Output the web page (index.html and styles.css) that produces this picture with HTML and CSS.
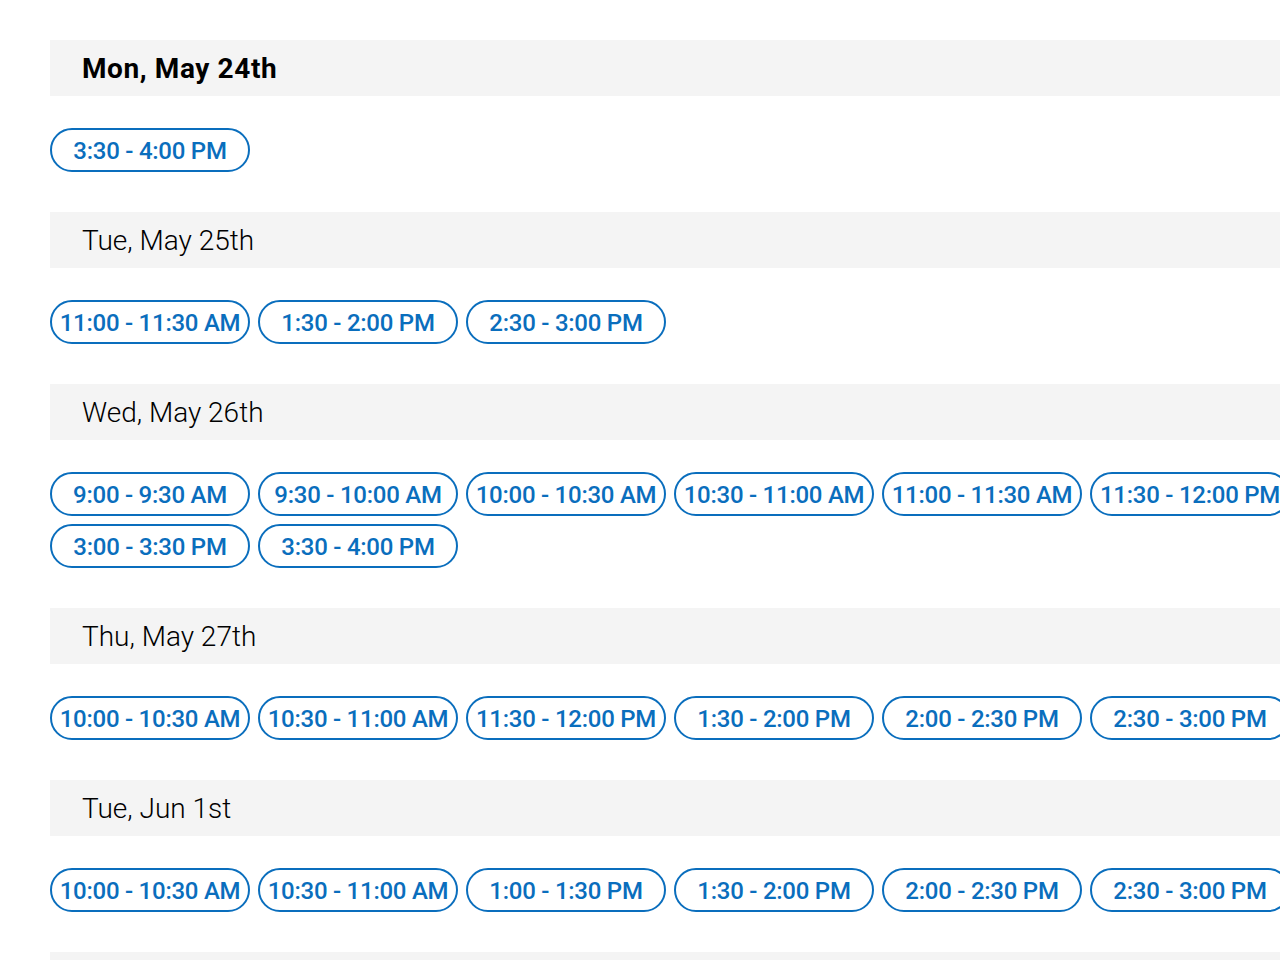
FILE: index.html
```html
<!DOCTYPE html>
<html lang="en">
<head>
    <meta charset="UTF-8">
    <meta name="viewport" content="width=device-width, initial-scale=1.0">
    <title>Available times</title>
    <link rel="stylesheet" href="styles.css">
</head>
<body>
    <div class="schedule">
        <div class="day">
            <h2 class="day-title active">Mon, May 24th</h2>
            <div class="slots">
                <button class="slot">3:30 - 4:00 PM</button>
            </div>
        </div>
        <div class="day">
            <h2 class="day-title">Tue, May 25th</h2>
            <div class="slots">
                <button class="slot">11:00 - 11:30 AM</button>
                <button class="slot">1:30 - 2:00 PM</button>
                <button class="slot">2:30 - 3:00 PM</button>
            </div>
        </div>
        <div class="day">
            <h2 class="day-title">Wed, May 26th</h2>
            <div class="slots">
                <button class="slot">9:00 - 9:30 AM</button>
                <button class="slot">9:30 - 10:00 AM</button>
                <button class="slot">10:00 - 10:30 AM</button>
                <button class="slot">10:30 - 11:00 AM</button>
                <button class="slot">11:00 - 11:30 AM</button>
                <button class="slot">11:30 - 12:00 PM</button>
                <button class="slot">3:00 - 3:30 PM</button>
                <button class="slot">3:30 - 4:00 PM</button>
            </div>
        </div>
        <div class="day">
            <h2 class="day-title">Thu, May 27th</h2>
            <div class="slots">
                <button class="slot">10:00 - 10:30 AM</button>
                <button class="slot">10:30 - 11:00 AM</button>
                <button class="slot">11:30 - 12:00 PM</button>
                <button class="slot">1:30 - 2:00 PM</button>
                <button class="slot">2:00 - 2:30 PM</button>
                <button class="slot">2:30 - 3:00 PM</button>
            </div>
        </div>
        <div class="day">
            <h2 class="day-title">Tue, Jun 1st</h2>
            <div class="slots">
                <button class="slot">10:00 - 10:30 AM</button>
                <button class="slot">10:30 - 11:00 AM</button>
                <button class="slot">1:00 - 1:30 PM</button>
                <button class="slot">1:30 - 2:00 PM</button>
                <button class="slot">2:00 - 2:30 PM</button>
                <button class="slot">2:30 - 3:00 PM</button>
            </div>
        </div>
        <div class="day">
            <h2 class="day-title"></h2>
        </div>
    </div>
</body>
</html>
```

FILE: styles.css
```css
body {
    font-family: Roboto, Arial, sans-serif;
    margin: 0;
    padding: 0;
    background: #fff;
    overflow: hidden;
}
.schedule {
    width: 1400px;
    padding: 40px 0 0 50px;
}
.day {
    margin-bottom: 40px;
}
.day-title {
    margin: 0 0 32px 0;
    height: 56px;
    line-height: 58px;
    padding-left: 32px;
    background: #f4f4f4;
    font-size: 28px;
    font-weight: 300;
    color: #000;
}
.day-title.active {
    font-weight: 700;
    letter-spacing: 0.6px;
}
.slots {
    display: flex;
    flex-wrap: wrap;
    gap: 8px;
}
.slot {
    box-sizing: border-box;
    width: 200px;
    height: 44px;
    padding: 2px 0 0 0;
    font-family: Roboto, Arial, sans-serif;
    font-size: 24px;
    font-weight: 500;
    letter-spacing: -0.25px;
    white-space: nowrap;
    color: #0a6ebd;
    background: #fff;
    border: 2px solid #0a6ebd;
    border-radius: 22px;
    cursor: pointer;
}
.slot:hover {
    background: #eaf3fb;
}
```
